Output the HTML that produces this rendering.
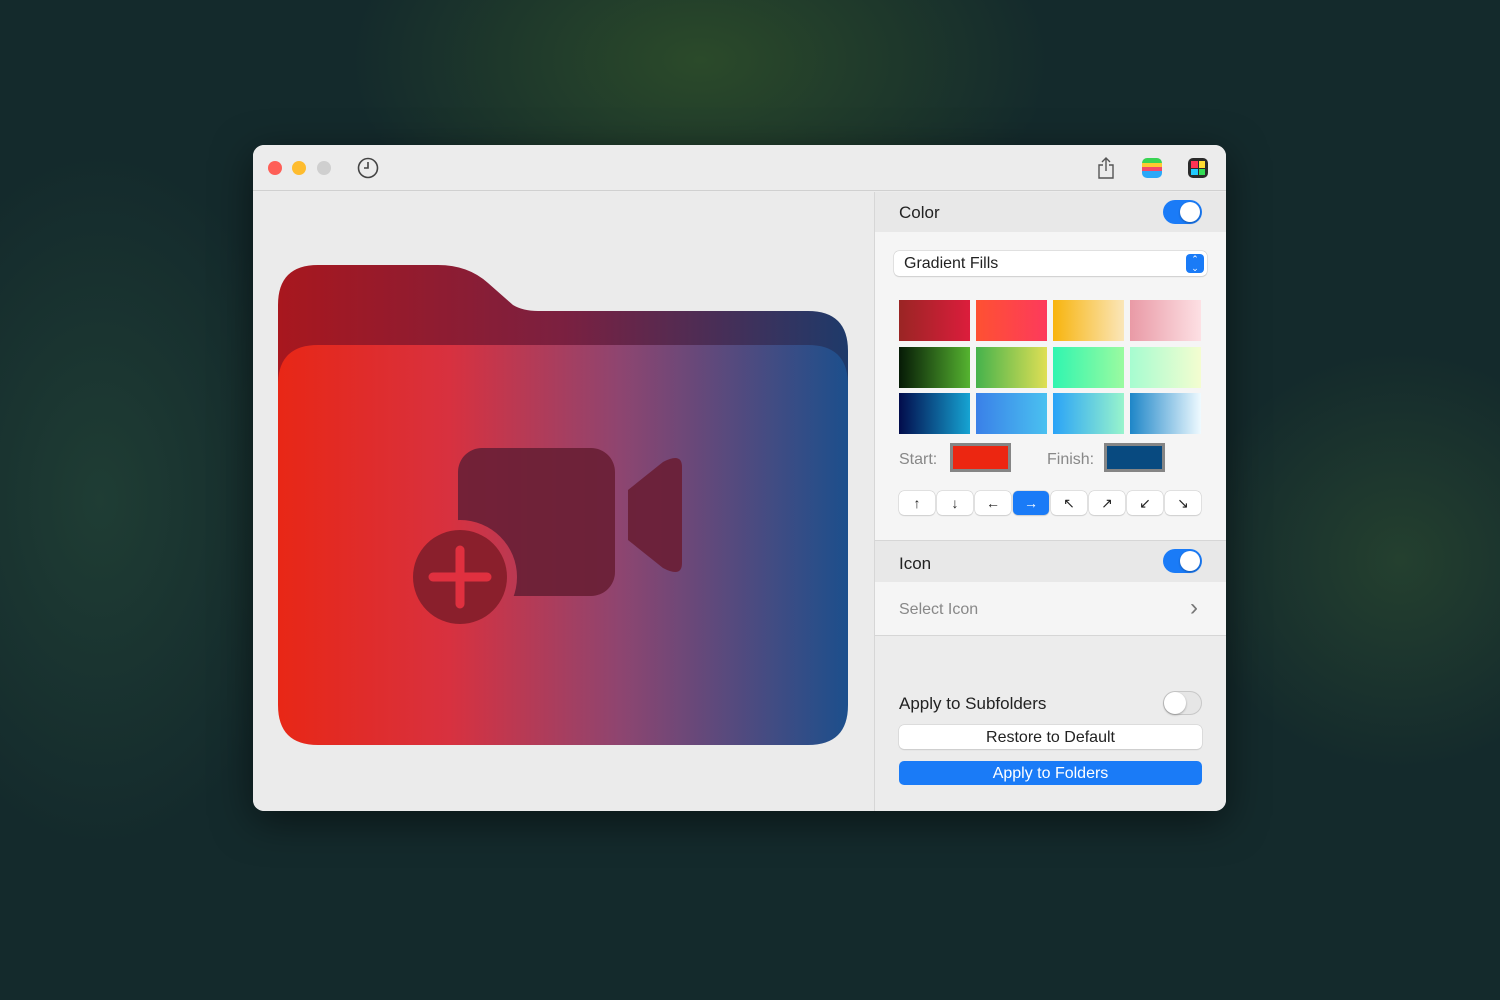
<!DOCTYPE html>
<html><head><style>
*{margin:0;padding:0;box-sizing:border-box}
body{width:1500px;height:1000px;overflow:hidden;font-family:"Liberation Sans",sans-serif;position:relative;
background:radial-gradient(ellipse 500px 300px at 700px 60px,#2b4a2a 0%,transparent 70%),radial-gradient(ellipse 300px 500px at 100px 500px,#1f3d34 0%,transparent 70%),radial-gradient(ellipse 300px 300px at 1400px 560px,#24402f 0%,transparent 70%),#142a2c}
.win{position:absolute;left:253px;top:145px;width:973px;height:666px;border-radius:11px;overflow:hidden;background:#ececec;box-shadow:0 10px 40px rgba(0,0,0,.5)}
.tb{position:absolute;left:0;top:0;width:100%;height:46px;background:#ececec;border-bottom:1px solid #d0d0d0}
.dot{position:absolute;top:16px;width:14px;height:14px;border-radius:50%}
.side{position:absolute;left:621px;top:47px;width:352px;height:619px;border-left:1px solid #d6d6d6;background:#ececec}
.hdr{position:absolute;left:0;width:100%;height:40px;background:#e8e8e8;font-size:17px;color:#222;padding:11px 24px}
.tog{position:absolute;right:24px;top:8px;width:39px;height:24px;border-radius:12px;background:#1a7bf7}
.tog::after{content:"";position:absolute;right:2px;top:2px;width:20px;height:20px;border-radius:50%;background:#fff;box-shadow:0 1px 2px rgba(0,0,0,.3)}
.sw{position:absolute;width:71px;height:41px}
.btn{position:absolute;left:24px;width:303px;height:24px;border-radius:5px;font-size:16px;text-align:center;line-height:26px}
.ar{position:absolute;top:299px;width:36px;height:24px;background:#fff;border-radius:5px;box-shadow:0 0 0 .5px #ccc,0 1px 1px rgba(0,0,0,.15);text-align:center;line-height:24px;font-size:14px;color:#222}
</style></head><body>
<div class="win">
<div class="tb">
<div class="dot" style="left:15px;background:#fe5f57"></div>
<div class="dot" style="left:39px;background:#febc2e"></div>
<div class="dot" style="left:64px;background:#cfcfcf"></div>
<svg style="position:absolute;left:104px;top:12px" width="22" height="22" viewBox="0 0 22 22"><circle cx="11" cy="11" r="9.5" fill="none" stroke="#444" stroke-width="1.6"/><path d="M11 5v6H7" fill="none" stroke="#444" stroke-width="1.6"/></svg>
<svg style="position:absolute;left:843px;top:11px" width="20" height="24" viewBox="0 0 20 24"><path d="M7 9H3v13h14V9h-4M10 15V2M6 6l4-4 4 4" fill="none" stroke="#555" stroke-width="1.4"/></svg>
<div style="position:absolute;left:889px;top:13px;width:20px;height:20px;border-radius:5px;background:linear-gradient(#39d353 0 25%,#fdca30 25% 45%,#f04a6a 45% 65%,#2aa8f8 65%)"></div>
<div style="position:absolute;left:935px;top:13px;width:20px;height:20px;border-radius:5px;background:#2a2a2a;padding:3px;display:grid;grid-template-columns:1fr 1fr;gap:1px"><i style="background:#f35"></i><i style="background:#fd3"></i><i style="background:#2cf"></i><i style="background:#3d5"></i></div>
</div>
<div style="position:absolute;left:0;top:47px;width:621px;height:619px;background:#ebebeb">
<svg style="position:absolute;left:25px;top:73px" width="572" height="483" viewBox="0 0 572 483">
<defs>
<linearGradient id="g" gradientUnits="userSpaceOnUse" x1="0" y1="0" x2="570" y2="0"><stop offset="0" stop-color="#e82716"/><stop offset=".3" stop-color="#d8313f"/><stop offset=".6" stop-color="#8e4570"/><stop offset="1" stop-color="#1c4f8c"/></linearGradient>
<linearGradient id="b" x1="0" x2="1"><stop offset="0" stop-color="#a8171e"/><stop offset=".5" stop-color="#7b2040"/><stop offset="1" stop-color="#1e3a6a"/></linearGradient>
</defs>
<path d="M0 40Q0 0 40 0H160Q190 0 210 18L235 40Q245 46 260 46H530Q570 46 570 86V300H0Z" fill="url(#b)"/>
<path d="M0 120Q0 80 40 80H530Q570 80 570 120V440Q570 480 530 480H40Q0 480 0 440Z" fill="url(#g)"/>
<g fill="#6a2036" opacity=".92"><rect x="180" y="183" width="157" height="148" rx="24"/><path d="M350 225l35-28q19-10 19 5v96q0 15-19 5l-35-28z"/></g>
<circle cx="182" cy="312" r="57" fill="url(#g)"/>
<circle cx="182" cy="312" r="47" fill="#8a1f2c"/>
<path d="M182 285v54M155 312h54" stroke="#e0303f" stroke-width="9" stroke-linecap="round"/>
</svg>
</div>
<div class="side">
<div class="hdr" style="top:0">Color<div class="tog"></div></div>
<div style="position:absolute;top:40px;left:0;width:100%;height:308px;background:#f5f5f5"></div>
<div style="position:absolute;left:19px;top:59px;width:313px;height:25px;background:#fff;border-radius:5px;box-shadow:0 0 0 .5px #ccc,0 1px 1px rgba(0,0,0,.15);font-size:16px;color:#222;padding:4px 10px">Gradient Fills<div style="position:absolute;right:3px;top:3px;width:18px;height:19px;border-radius:4px;background:#1a7bf7;color:#fff;font-size:9px;line-height:9px;text-align:center;padding-top:1px">⌃<br>⌄</div></div>
<div class="sw" style="left:24px;top:108px;background:linear-gradient(90deg,#9a2524,#dc1d3c)"></div>
<div class="sw" style="left:101px;top:108px;background:linear-gradient(90deg,#fe5132,#fd3a5c)"></div>
<div class="sw" style="left:178px;top:108px;background:linear-gradient(90deg,#f8b40d,#fae6b9)"></div>
<div class="sw" style="left:255px;top:108px;background:linear-gradient(90deg,#e99aa6,#fde0e4)"></div>
<div class="sw" style="left:24px;top:155px;background:linear-gradient(90deg,#061a06,#55b330)"></div>
<div class="sw" style="left:101px;top:155px;background:linear-gradient(90deg,#45b24c,#dfdf55)"></div>
<div class="sw" style="left:178px;top:155px;background:linear-gradient(90deg,#30f5b0,#9bfba0)"></div>
<div class="sw" style="left:255px;top:155px;background:linear-gradient(90deg,#a6fcd0,#f4fdd0)"></div>
<div class="sw" style="left:24px;top:201px;background:linear-gradient(90deg,#020c4c,#16a4d3)"></div>
<div class="sw" style="left:101px;top:201px;background:linear-gradient(90deg,#3a80e8,#4ac1f0)"></div>
<div class="sw" style="left:178px;top:201px;background:linear-gradient(90deg,#2aa3f7,#98f4cc)"></div>
<div class="sw" style="left:255px;top:201px;background:linear-gradient(90deg,#1e86c8,#effaff)"></div>
<div style="position:absolute;left:24px;top:259px;font-size:16px;color:#888">Start:</div>
<div style="position:absolute;left:75px;top:251px;width:61px;height:29px;background:#ec2611;border:3px solid #858585"></div>
<div style="position:absolute;left:172px;top:259px;font-size:16px;color:#888">Finish:</div>
<div style="position:absolute;left:229px;top:251px;width:61px;height:29px;background:#084a80;border:3px solid #858585"></div>
<div class="ar" style="left:24px">↑</div><div class="ar" style="left:62px">↓</div><div class="ar" style="left:100px">←</div>
<div class="ar" style="left:138px;background:#1a7bf7;color:#fff">→</div>
<div class="ar" style="left:176px">↖</div><div class="ar" style="left:214px">↗</div><div class="ar" style="left:252px">↙</div><div class="ar" style="left:290px">↘</div>
<div class="hdr" style="top:348px;border-top:1px solid #d6d6d6;height:42px;padding-top:13px">Icon<div class="tog"></div></div>
<div style="position:absolute;top:390px;left:0;width:100%;height:54px;background:#f5f5f5;border-bottom:1px solid #d6d6d6;font-size:16px;color:#888;padding:19px 24px 0">Select Icon<span style="position:absolute;right:28px;top:12px;font-size:24px;color:#777">›</span></div>
<div style="position:absolute;left:24px;top:502px;font-size:17px;color:#222">Apply to Subfolders</div>
<div style="position:absolute;right:24px;top:499px;width:39px;height:24px;border-radius:12px;background:#e6e6e6;box-shadow:inset 0 0 0 1px #c8c8c8"><div style="position:absolute;left:1px;top:1px;width:22px;height:22px;border-radius:50%;background:#fff;box-shadow:0 1px 2px rgba(0,0,0,.3)"></div></div>
<div class="btn" style="top:533px;background:#fff;color:#222;box-shadow:0 0 0 .5px #ccc,0 1px 1px rgba(0,0,0,.15)">Restore to Default</div>
<div class="btn" style="top:569px;background:#1a7bf7;color:#fff">Apply to Folders</div>
</div>
</div>
</body></html>
